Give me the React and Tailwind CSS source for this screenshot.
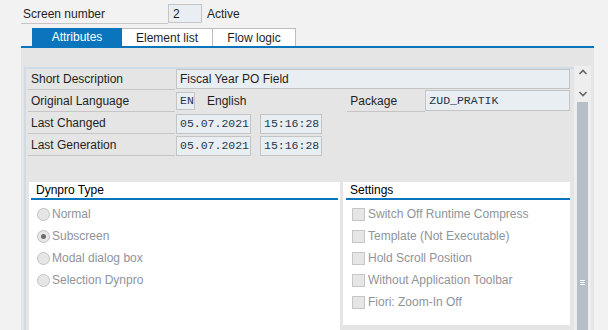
import React from 'react';

const Row = ({ label, children, first }) => (
    <div className={`flex items-start ${first ? 'h-[21px]' : 'h-[22px]'}`}>
        <div className={`ml-[2px] w-[147px] ${first ? 'h-[21px]' : 'h-[22px]'} border-b border-[#c6c6c6] pl-[3px] flex items-center text-[12px] text-[#1f1f1f]`}>
            {label}
        </div>
        {children}
    </div>
);

const Box = ({ className = '', mono, children }) => (
    <div className={`border border-[#c4c4c4] bg-[#e9eef2] flex items-center ${mono ? 'font-["Liberation_Mono",monospace] text-[11.5px] text-[#26364a] pl-[3px]' : 'text-[12px] pl-[3px] text-[#1f1f1f]'} ${className}`}>
        {children}
    </div>
);

const Radio = ({ label, checked }) => (
    <div className="h-[22px] flex items-center">
        <span className="ml-[6px] w-[13px] h-[13px] rounded-full border border-[#c2c2c2] bg-[#e6e6e6] flex items-center justify-center">
            {checked && <span className="w-[5px] h-[5px] rounded-full bg-[#6b6b6b]" />}
        </span>
        <span className="ml-[2px] text-[12px] text-[#8f949a]">{label}</span>
    </div>
);

const Check = ({ label }) => (
    <div className="h-[22px] flex items-center">
        <span className="ml-[6px] w-[13px] h-[13px] border border-[#c6c6c6] bg-[#e6e6e6]" />
        <span className="ml-[3px] text-[12px] text-[#8f949a] whitespace-nowrap">{label}</span>
    </div>
);

export default function App() {
    return (
        <div className="w-[608px] h-[330px] bg-[#f2f2f2] overflow-hidden font-['Liberation_Sans',Arial,sans-serif] text-[12px] text-[#1f1f1f]">
            {/* Header */}
            <div className="flex items-start pl-[21px] pt-[4px] h-[28px]">
                <div className="w-[147px] h-[20px] border-b border-[#c6c6c6] pl-[2px] flex items-center">Screen number</div>
                <div className="w-[34px] h-[19px] border border-[#c4c4c4] bg-[#e9eef2] pl-[4px] flex items-center">2</div>
                <div className="ml-[5px] h-[19px] flex items-center">Active</div>
            </div>

            {/* Tabs */}
            <div className="ml-[21px] w-[573px]">
                <div className="flex h-[18px] pl-[11px]">
                    <div className="w-[90px] bg-[#0a75bc] text-white flex items-center justify-center">Attributes</div>
                    <div className="w-[91px] bg-white border-t border-r border-[#bdbdbd] flex items-center justify-center">Element list</div>
                    <div className="w-[83px] bg-white border-t border-r border-[#bdbdbd] flex items-center justify-center">Flow logic</div>
                </div>
                <div className="h-[2px] bg-[#0a75bc]" />

                {/* Panel */}
                <div className="h-[282px] bg-[#e5e5e5] flex">
                    <div className="flex-1 pl-[3px] pt-[19px]">
                        <div className="h-full border-l-2 border-t-2 border-[#cfdce8]">
                            <Row label="Short Description" first>
                                <Box className="ml-[1px] flex-1 h-[20px]">Fiscal Year PO Field</Box>
                                <div className="w-[4px]" />
                            </Row>
                            <Row label="Original Language">
                                <Box mono className="ml-[1px] mt-[2px] w-[19px] h-[18px]">EN</Box>
                                <div className="ml-[12px] h-[22px] flex items-center">English</div>
                                <div className="ml-[101px] w-[78px] h-[22px] border-b border-[#c6c6c6] pl-[3px] flex items-center">Package</div>
                                <Box mono className="flex-1 h-[21px]">ZUD_PRATIK</Box>
                                <div className="w-[4px]" />
                            </Row>
                            <Row label="Last Changed">
                                <Box mono className="ml-[1px] mt-[2px] w-[75px] h-[20px]">05.07.2021</Box>
                                <Box mono className="ml-[9px] mt-[2px] w-[62px] h-[20px]">15:16:28</Box>
                            </Row>
                            <Row label="Last Generation">
                                <Box mono className="ml-[1px] mt-[2px] w-[75px] h-[20px]">05.07.2021</Box>
                                <Box mono className="ml-[9px] mt-[2px] w-[62px] h-[20px]">15:16:28</Box>
                            </Row>

                            {/* Groups */}
                            <div className="flex items-start mt-[26px] ml-[3px]">
                                <div className="w-[311px] h-[160px] bg-white px-[2px]">
                                    <div className="h-[18px] border-b-2 border-[#0a75bc] pl-[5px] flex items-end text-black leading-[16px]">Dynpro Type</div>
                                    <div className="pt-[3px]">
                                        <Radio label="Normal" />
                                        <Radio label="Subscreen" checked />
                                        <Radio label="Modal dialog box" />
                                        <Radio label="Selection Dynpro" />
                                    </div>
                                </div>
                                <div className="ml-[3px] w-[227px] h-[143px] bg-white pl-[3px]">
                                    <div className="h-[18px] border-b-2 border-[#0a75bc] pl-[4px] flex items-end text-black leading-[16px]">Settings</div>
                                    <div className="pt-[3px]">
                                        <Check label="Switch Off Runtime Compress" />
                                        <Check label="Template (Not Executable)" />
                                        <Check label="Hold Scroll Position" />
                                        <Check label="Without Application Toolbar" />
                                        <Check label="Fiori: Zoom-In Off" />
                                    </div>
                                </div>
                            </div>
                        </div>
                    </div>

                    {/* Scrollbar */}
                    <div className="w-[17px] mt-[18px] bg-[#eeeeee] flex flex-col items-center">
                        <svg width="10" height="18" viewBox="0 0 10 18" className="mt-[1px]">
                            <path d="M1.5 7 L5 3.5 L8.5 7" fill="none" stroke="#666" strokeWidth="1.6" />
                        </svg>
                        <svg width="10" height="18" viewBox="0 0 10 18">
                            <path d="M1.5 7 L5 10.5 L8.5 7" fill="none" stroke="#666" strokeWidth="1.6" />
                        </svg>
                        <div className="mt-[-1px] w-[11px] flex-1 bg-[#b4bfca] flex flex-col items-center pt-[178px] gap-[1px]">
                            <div className="w-[5px] h-[1px] bg-white" />
                            <div className="w-[5px] h-[1px] bg-white" />
                            <div className="w-[5px] h-[1px] bg-white" />
                        </div>
                    </div>
                    <div className="w-[3px]" />
                </div>
            </div>
        </div>
    );
}
